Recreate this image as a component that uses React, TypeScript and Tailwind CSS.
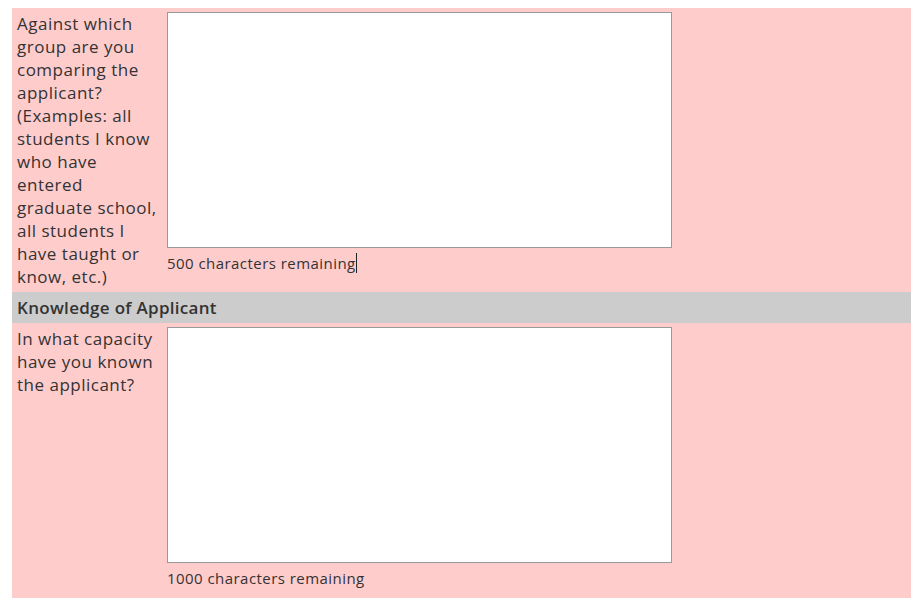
import React from "react";

const font = { fontFamily: "'Open Sans', 'Noto Sans', sans-serif" };

function Row({ lines, remaining, caret }: { lines: string[]; remaining: string; caret?: boolean }) {
  return (
    <div className="flex bg-[#ffcccc]">
      <div className="w-[155px] shrink-0 px-[5px] py-[4px] text-[17px] leading-[23px] tracking-[0.5px] text-[#333]">
        {lines.map((l, i) => (
          <div key={i} className="whitespace-nowrap">{l}</div>
        ))}
      </div>
      <div className="pt-[4px] pb-[10px]">
        <textarea className="block w-[505px] h-[236px] bg-white border border-[#999] resize-none outline-none" />
        <div className="mt-[4px] text-[15px] leading-[22px] tracking-[0.45px] text-[#333] flex items-center">
          <span>{remaining}</span>
          {caret && <span className="inline-block w-px h-[20px] bg-[#222]" />}
        </div>
      </div>
    </div>
  );
}

export default function App() {
  return (
    <div className="bg-white min-h-[598px] pt-[8px] pl-[12px] pr-[13px]" style={font}>
      <div className="w-[899px]">
        <Row
          lines={[
            "Against which",
            "group are you",
            "comparing the",
            "applicant?",
            "(Examples: all",
            "students I know",
            "who have",
            "entered",
            "graduate school,",
            "all students I",
            "have taught or",
            "know, etc.)",
          ]}
          remaining="500 characters remaining"
          caret
        />
        <div className="bg-[#cccccc] px-[5px] py-[4px] text-[17px] leading-[23px] tracking-[0.3px] font-semibold text-[#333]">
          Knowledge of Applicant
        </div>
        <Row
          lines={["In what capacity", "have you known", "the applicant?"]}
          remaining="1000 characters remaining"
        />
      </div>
    </div>
  );
}
